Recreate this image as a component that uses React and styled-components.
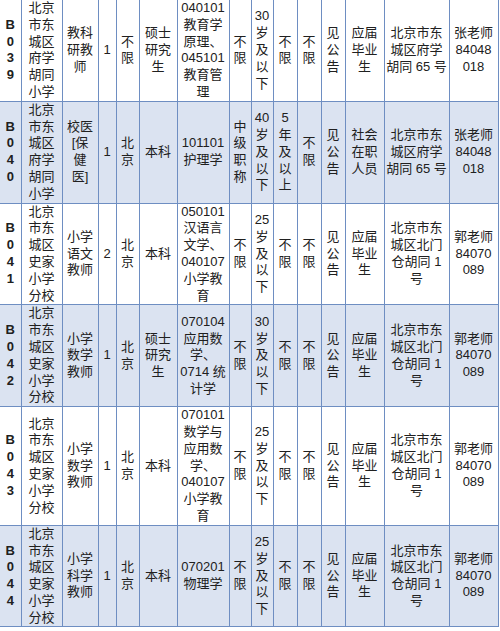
import React from "react";
import styled, { createGlobalStyle } from "styled-components";

const GlobalStyle = createGlobalStyle`
  html, body {
    margin: 0;
    padding: 0;
    background: #ffffff;
  }
  body {
    width: 500px;
    height: 631px;
    overflow: hidden;
  }
`;

const Table = styled.table`
  width: 498px;
  table-layout: fixed;
  border-collapse: collapse;
  font-family: "Liberation Sans", "Noto Sans CJK SC", sans-serif;
  font-size: 13px;
  line-height: 16.8px;
  color: #202020;
`;

const Row = styled.tr`
  background: ${(p) => (p.$shaded ? "#dbe3f1" : "#ffffff")};
`;

const Cell = styled.td`
  padding: 0;
  text-align: center;
  vertical-align: middle;
  border: 1px solid #6e8ec2;
  overflow: visible;
  white-space: nowrap;
  font-weight: ${(p) => (p.$bold ? 700 : 400)};
  &:first-child {
    border-left: none;
  }
`;

const FirstRow = styled(Row)`
  & > td {
    border-top: none;
  }
`;

const Line = styled.span`
  display: block;
`;

const widths = [21, 41, 36, 18, 23, 38, 52, 22, 22, 24, 24, 24, 39, 65, 49];

const split = (s) => s.split("/");

const rows = [
  {
    code: "B039",
    school: "北京/市东/城区/府学/胡同/小学",
    post: "教科/研教/师",
    count: "1",
    hukou: "不/限",
    edu: "硕士/研究/生",
    major: "040101/教育学/原理、/045101/教育管/理",
    title: "不/限",
    age: "30/岁/及/以/下",
    exp: "不/限",
    other: "不/限",
    src: "见/公/告",
    who: "应届/毕业/生",
    addr: "北京市东/城区府学/胡同 65 号",
    tel: "张老师/84048/018",
  },
  {
    code: "B040",
    school: "北京/市东/城区/府学/胡同/小学",
    post: "校医/[保/健/医]",
    count: "1",
    hukou: "北/京",
    edu: "本科",
    major: "101101/护理学",
    title: "中/级/职/称",
    age: "40/岁/及/以/下",
    exp: "5/年/及/以/上",
    other: "不/限",
    src: "见/公/告",
    who: "社会/在职/人员",
    addr: "北京市东/城区府学/胡同 65 号",
    tel: "张老师/84048/018",
  },
  {
    code: "B041",
    school: "北京/市东/城区/史家/小学/分校",
    post: "小学/语文/教师",
    count: "2",
    hukou: "北/京",
    edu: "本科",
    major: "050101/汉语言/文学、/040107/小学教/育",
    title: "不/限",
    age: "25/岁/及/以/下",
    exp: "不/限",
    other: "不/限",
    src: "见/公/告",
    who: "应届/毕业/生",
    addr: "北京市东/城区北门/仓胡同 1/号",
    tel: "郭老师/84070/089",
  },
  {
    code: "B042",
    school: "北京/市东/城区/史家/小学/分校",
    post: "小学/数学/教师",
    count: "1",
    hukou: "北/京",
    edu: "硕士/研究/生",
    major: "070104/应用数/学、/0714 统/计学",
    title: "不/限",
    age: "30/岁/及/以/下",
    exp: "不/限",
    other: "不/限",
    src: "见/公/告",
    who: "应届/毕业/生",
    addr: "北京市东/城区北门/仓胡同 1/号",
    tel: "郭老师/84070/089",
  },
  {
    code: "B043",
    school: "北京/市东/城区/史家/小学/分校",
    post: "小学/数学/教师",
    count: "1",
    hukou: "北/京",
    edu: "本科",
    major: "070101/数学与/应用数/学、/040107/小学教/育",
    title: "不/限",
    age: "25/岁/及/以/下",
    exp: "不/限",
    other: "不/限",
    src: "见/公/告",
    who: "应届/毕业/生",
    addr: "北京市东/城区北门/仓胡同 1/号",
    tel: "郭老师/84070/089",
  },
  {
    code: "B044",
    school: "北京/市东/城区/史家/小学/分校",
    post: "小学/科学/教师",
    count: "1",
    hukou: "北/京",
    edu: "本科",
    major: "070201/物理学",
    title: "不/限",
    age: "25/岁/及/以/下",
    exp: "不/限",
    other: "不/限",
    src: "见/公/告",
    who: "应届/毕业/生",
    addr: "北京市东/城区北门/仓胡同 1/号",
    tel: "郭老师/84070/089",
  },
];

const keys = [
  "school",
  "post",
  "count",
  "hukou",
  "edu",
  "major",
  "title",
  "age",
  "exp",
  "other",
  "src",
  "who",
  "addr",
  "tel",
];

const Lines = ({ text }) =>
  split(text).map((l, i) => <Line key={i}>{l}</Line>);

const App = () => {
  return (
    <>
      <GlobalStyle />
      <Table>
        <colgroup>
          {widths.map((w, i) => (
            <col key={i} style={{ width: w }} />
          ))}
        </colgroup>
        <tbody>
          {rows.map((r, i) => {
            const R = i === 0 ? FirstRow : Row;
            return (
              <R key={r.code} $shaded={i % 2 === 1}>
                <Cell $bold>
                  <Lines text={r.code.split("").join("/")} />
                </Cell>
                {keys.map((k) => (
                  <Cell key={k}>
                    <Lines text={r[k]} />
                  </Cell>
                ))}
              </R>
            );
          })}
        </tbody>
      </Table>
    </>
  );
};

export default App;
